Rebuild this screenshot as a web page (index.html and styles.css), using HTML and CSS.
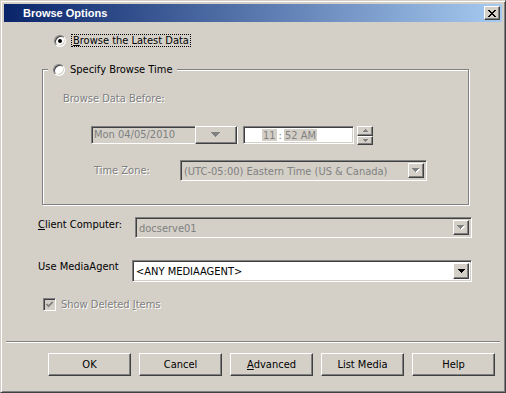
FILE: index.html
```html
<!DOCTYPE html>
<html lang="en">

<head>
    <meta charset="UTF-8">
    <meta name="viewport" content="width=device-width, initial-scale=1.0">
    <title>Browse Options</title>
    <link rel="stylesheet" href="styles.css">
</head>

<body>
    <div class="window">
        <div class="titleBar">
            <span class="title">Browse Options</span>
            <span class="closeButton">
                <svg width="8" height="7" viewBox="0 0 8 7" shape-rendering="crispEdges">
                    <path fill="#000" d="M0 0h2v1h-2z M6 0h2v1h-2z M1 1h2v1h-2z M5 1h2v1h-2z M2 2h4v1h-4z M3 3h2v1h-2z M2 4h4v1h-4z M1 5h2v1h-2z M5 5h2v1h-2z M0 6h2v1h-2z M6 6h2v1h-2z" />
                </svg>
            </span>
        </div>

        <div class="radioRow latestRow">
            <span class="radio checked"></span>
            <span class="focusLabel"><u>B</u>rowse the Latest Data</span>
        </div>

        <fieldset class="groupBox">
            <legend>
                <div class="legendInner">
                    <span class="radio"></span>
                    <span class="legendText">Specify Browse Time</span>
                </div>
            </legend>

            <div class="disabledText beforeLabel">Browse Data Before:</div>

            <div class="dateRow">
                <div class="sunken datePicker">
                    <span class="dateText">Mon 04/05/2010</span>
                    <span class="raised dateButton">
                        <svg width="10" height="6" viewBox="0 0 10 6" shape-rendering="crispEdges">
                            <path fill="#808080" d="M0 0h9v1h-1v1h-1v1h-1v1h-1v1h-1v-1h-1v-1h-1v-1h-1v-1h-1z" />
                        </svg>
                    </span>
                </div>
                <div class="sunken timePicker">
                    <span class="timeSegment">11</span>
                    <span class="timeColon">:</span>
                    <span class="timeSegment">52 AM</span>
                </div>
                <div class="spinner">
                    <span class="raised spinButton">
                        <svg width="5" height="3" viewBox="0 0 5 3" shape-rendering="crispEdges">
                            <path fill="#808080" d="M2 0h1v1h1v1h1v1h-5v-1h1v-1h1z" />
                        </svg>
                    </span>
                    <span class="raised spinButton">
                        <svg width="5" height="3" viewBox="0 0 5 3" shape-rendering="crispEdges">
                            <path fill="#808080" d="M0 0h5v1h-1v1h-1v1h-1v-1h-1v-1h-1z" />
                        </svg>
                    </span>
                </div>
            </div>

            <div class="zoneRow">
                <span class="disabledText zoneLabel">Time Zone:</span>
                <div class="sunken combo zoneCombo">
                    <span class="comboText mutedText">(UTC-05:00) Eastern Time (US &amp; Canada)</span>
                    <span class="raised comboButton">
                        <svg width="8" height="5" viewBox="0 0 8 5" shape-rendering="crispEdges">
                            <path fill="#fff" d="M1 1h7v1h-1v1h-1v1h-1v1h-1v-1h-1v-1h-1v-1h-1z" />
                            <path fill="#808080" d="M0 0h7v1h-1v1h-1v1h-1v1h-1v-1h-1v-1h-1v-1h-1z" />
                        </svg>
                    </span>
                </div>
            </div>
        </fieldset>

        <div class="fieldRow clientRow">
            <span class="fieldLabel clientLabel"><u>C</u>lient Computer:</span>
            <div class="sunken combo clientCombo">
                <span class="comboText mutedText">docserve01</span>
                <span class="raised comboButton">
                    <svg width="8" height="5" viewBox="0 0 8 5" shape-rendering="crispEdges">
                        <path fill="#fff" d="M1 1h7v1h-1v1h-1v1h-1v1h-1v-1h-1v-1h-1v-1h-1z" />
                        <path fill="#808080" d="M0 0h7v1h-1v1h-1v1h-1v1h-1v-1h-1v-1h-1v-1h-1z" />
                    </svg>
                </span>
            </div>
        </div>

        <div class="fieldRow mediaRow">
            <span class="fieldLabel mediaLabel">Use MediaAgent</span>
            <div class="sunken combo mediaCombo">
                <span class="comboText">&lt;ANY MEDIAAGENT&gt;</span>
                <span class="raised comboButton">
                    <svg width="7" height="4" viewBox="0 0 7 4" shape-rendering="crispEdges">
                        <path fill="#000" d="M0 0h7v1h-1v1h-1v1h-1v1h-1v-1h-1v-1h-1v-1h-1z" />
                    </svg>
                </span>
            </div>
        </div>

        <div class="checkRow">
            <span class="sunken checkBox">
                <svg width="9" height="9" viewBox="0 0 9 9">
                    <polyline points="1.5,4 3.5,6.2 7.8,1.8" fill="none" stroke="#808080" stroke-width="1.8" />
                </svg>
            </span>
            <span class="disabledText">Show Deleted <u>I</u>tems</span>
        </div>

        <div class="separator"></div>

        <div class="buttonRow">
            <span class="raised pushButton">OK</span>
            <span class="raised pushButton">Cancel</span>
            <span class="raised pushButton"><u>A</u>dvanced</span>
            <span class="raised pushButton">List Media</span>
            <span class="raised pushButton">Help</span>
        </div>
    </div>
</body>

</html>
```

FILE: styles.css
```css
* {
    box-sizing: border-box;
}

body {
    margin: 0;
    background-color: #d4d0c8;
    font-family: "DejaVu Sans Condensed", "Liberation Sans", sans-serif;
    font-size: 11px;
    color: #000;
}

u {
    text-decoration: underline;
    text-underline-offset: 1px;
}

/* window frame */

.window {
    width: 506px;
    height: 393px;
    background-color: #d4d0c8;
    border: 1px solid;
    border-color: #d4d0c8 #404040 #404040 #d4d0c8;
    box-shadow: inset 1px 1px #fff, inset -1px -1px #808080;
    padding: 3px;
}

.titleBar {
    height: 18px;
    display: flex;
    align-items: center;
    justify-content: space-between;
    padding: 0 2px 0 19px;
    background: linear-gradient(to right, #0a246a, #a6caf0);
}

.title {
    color: #fff;
    font-family: "Liberation Sans", sans-serif;
    font-weight: bold;
    font-size: 11px;
}

.closeButton {
    width: 16px;
    height: 14px;
    display: flex;
    justify-content: center;
    align-items: center;
    background-color: #d4d0c8;
}

/* shared 3d borders */

.raised {
    background-color: #d4d0c8;
    border: 1px solid;
    border-color: #fff #404040 #404040 #fff;
    box-shadow: inset -1px -1px #808080;
}

.closeButton {
    border: 1px solid;
    border-color: #fff #404040 #404040 #fff;
    box-shadow: inset -1px -1px #808080;
}

.sunken {
    border: 1px solid;
    border-color: #808080 #fff #fff #808080;
    box-shadow: inset 1px 1px #404040, inset -1px -1px #d4d0c8;
}

.disabledText {
    color: #808080;
    text-shadow: 1px 1px 0 #fff;
}

.mutedText {
    color: #808080;
}

/* radios */

.radioRow {
    display: flex;
    align-items: center;
    height: 13px;
}

.latestRow {
    margin: 12px 0 0 50px;
}

.radio {
    position: relative;
    width: 12px;
    height: 12px;
    flex: none;
    border-radius: 50%;
    background-color: #fff;
    border: 1px solid;
    border-color: #808080 #fff #fff #808080;
    box-shadow: inset 1px 1px #404040, inset -1px -1px #d4d0c8;
}

.radio.checked::after {
    content: "";
    position: absolute;
    left: 3px;
    top: 3px;
    width: 4px;
    height: 4px;
    border-radius: 50%;
    background-color: #000;
}

.focusLabel {
    margin-left: 5px;
    padding: 0 1px;
    line-height: 11px;
    border: 1px dotted #000;
}

/* group box */

.groupBox {
    width: 427px;
    min-width: 0;
    margin: 16px 0 0 38px;
    padding: 0 0 23px 0;
    border: 1px solid #808080;
    box-shadow: 1px 1px #fff, inset 1px 1px #fff;
}

.groupBox legend {
    margin-left: 5px;
    padding: 0 5px;
    background-color: #d4d0c8;
}

.legendInner {
    display: flex;
    align-items: center;
    height: 13px;
    gap: 5px;
}

.beforeLabel {
    margin: 16px 0 0 20px;
    line-height: 13px;
}

.dateRow {
    display: flex;
    align-items: flex-start;
    margin: 21px 0 0 48px;
}

.datePicker {
    width: 147px;
    height: 18px;
    display: flex;
    align-items: stretch;
    justify-content: space-between;
    padding: 1px 0 1px 1px;
}

.dateText {
    color: #808080;
    line-height: 14px;
    padding-left: 1px;
}

.dateButton {
    width: 42px;
    margin-top: -2px;
    margin-bottom: -2px;
    display: flex;
    align-items: center;
    justify-content: center;
}

.timePicker {
    width: 111px;
    height: 18px;
    margin-left: 5px;
    display: flex;
    align-items: stretch;
    padding: 2px 2px 2px 18px;
    background-color: #fff;
    color: #808080;
    line-height: 14px;
}

.timeSegment {
    background-color: #d4d0c8;
    padding: 0 1px;
}

.timeColon {
    padding: 0 2px;
}

.spinner {
    width: 16px;
    height: 19px;
    margin-left: 3px;
    display: flex;
    flex-direction: column;
}

.spinButton {
    flex: 1;
    display: flex;
    align-items: center;
    justify-content: center;
}

.zoneRow {
    display: flex;
    align-items: center;
    margin: 15px 0 0 51px;
}

.zoneLabel {
    width: 86px;
}

/* combos */

.combo {
    display: flex;
    align-items: stretch;
    justify-content: space-between;
    padding: 2px;
}

.comboText {
    line-height: 17px;
    padding-left: 1px;
}

.comboButton {
    width: 16px;
    display: flex;
    align-items: center;
    justify-content: center;
}

.zoneCombo {
    width: 247px;
    height: 21px;
}

.fieldRow {
    display: flex;
    align-items: flex-start;
    margin-left: 34px;
}

.fieldLabel {
    line-height: 13px;
}

.clientRow {
    margin-top: 12px;
}

.clientLabel {
    width: 97px;
    padding-top: 1px;
}

.clientCombo {
    width: 337px;
    height: 21px;
}

.mediaRow {
    margin-top: 22px;
}

.mediaLabel {
    width: 94px;
}

.mediaCombo {
    width: 340px;
    height: 22px;
    background-color: #fff;
}

/* checkbox */

.checkRow {
    display: flex;
    align-items: center;
    gap: 5px;
    margin: 16px 0 0 39px;
    height: 13px;
}

.checkBox {
    width: 13px;
    height: 13px;
    display: flex;
    align-items: center;
    justify-content: center;
    background-color: #d4d0c8;
}

/* bottom */

.separator {
    height: 2px;
    margin: 30px 2px 0 2px;
    border-top: 1px solid #808080;
    border-bottom: 1px solid #fff;
}

.buttonRow {
    display: flex;
    gap: 8px;
    margin: 10px 0 0 44px;
}

.pushButton {
    width: 83px;
    height: 23px;
    display: flex;
    align-items: center;
    justify-content: center;
}
```
